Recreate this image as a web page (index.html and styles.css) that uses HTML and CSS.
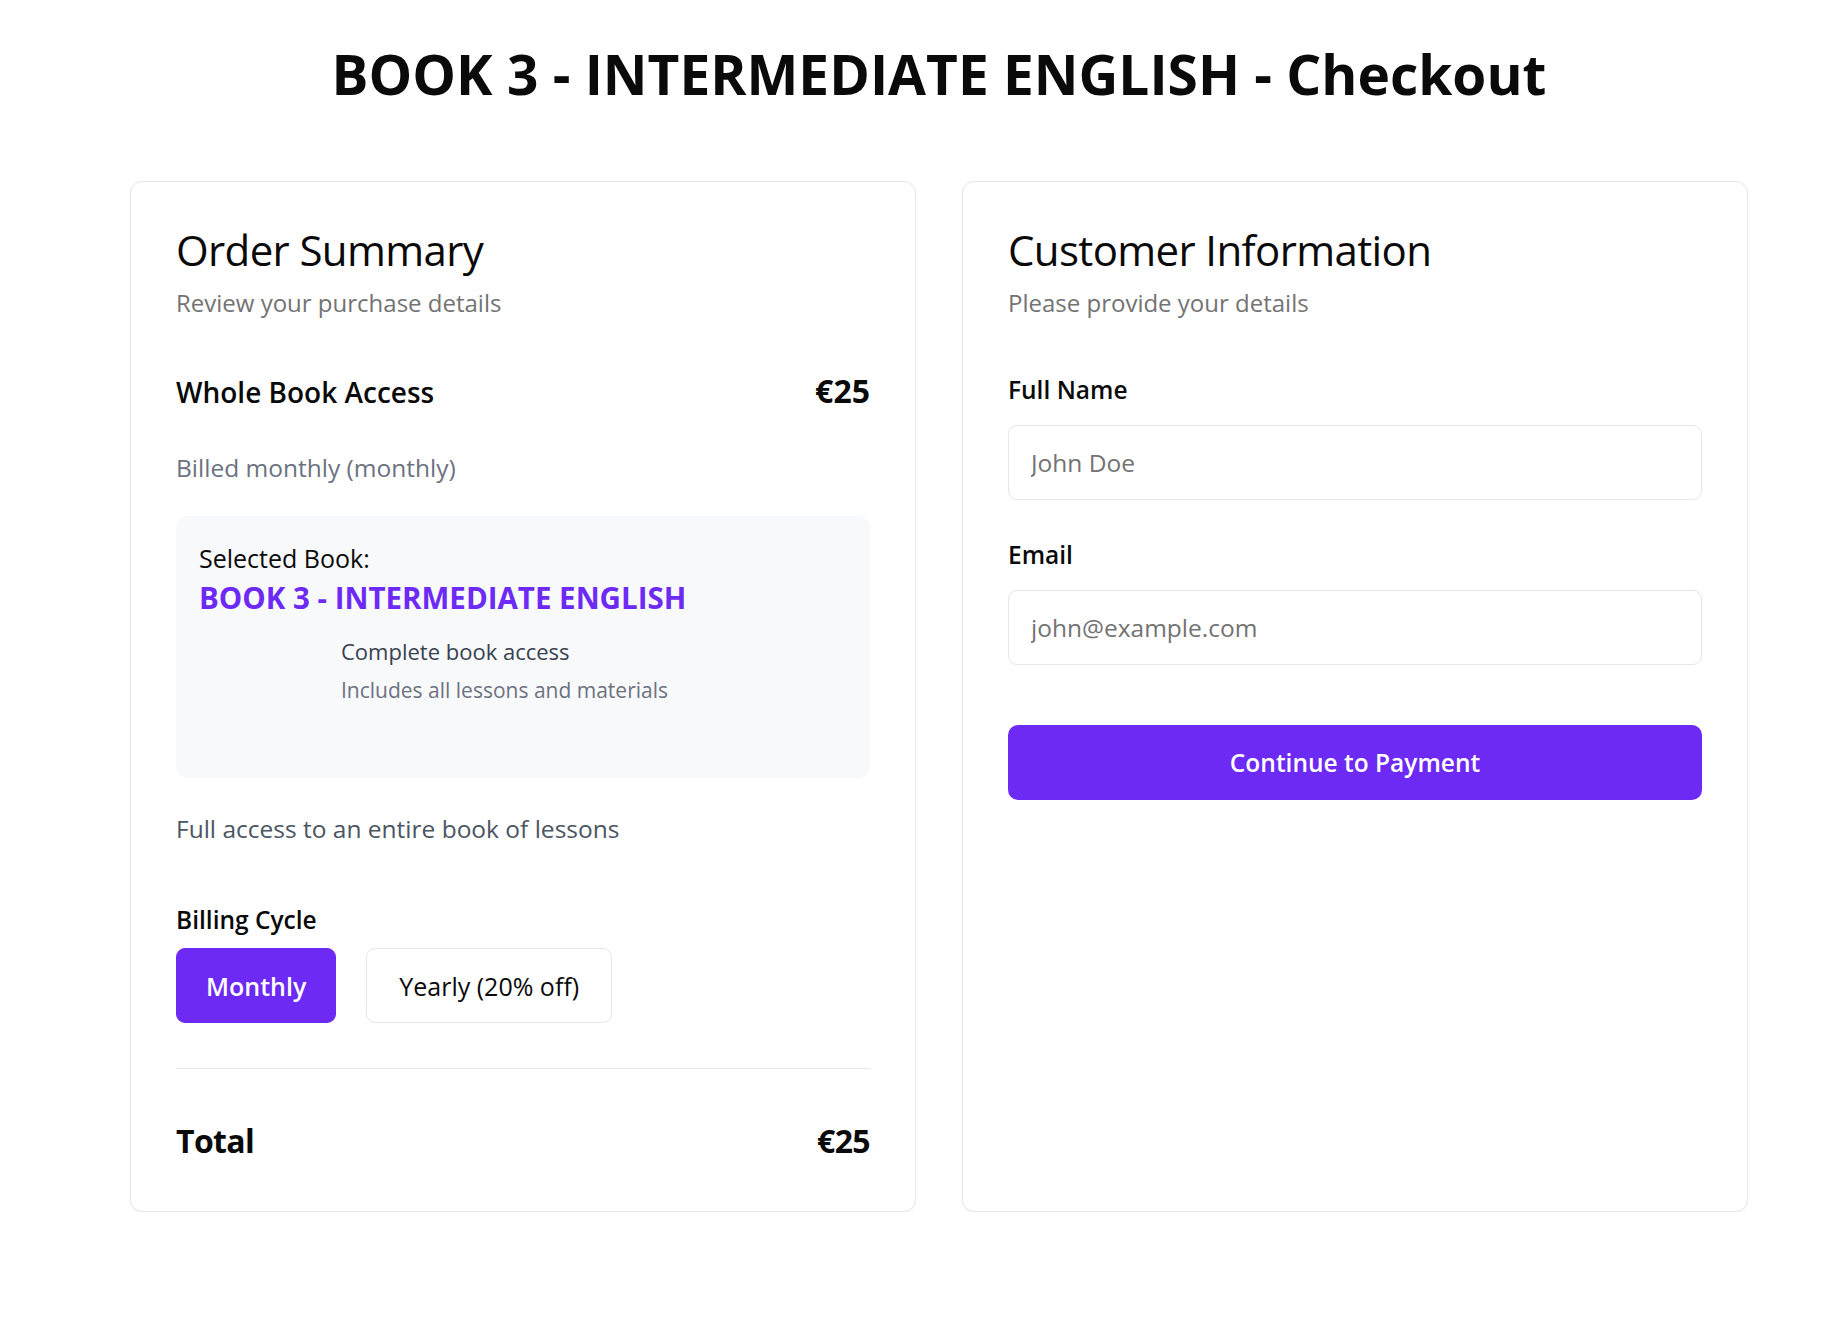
FILE: index.html
```html
<!DOCTYPE html>
<html lang="en">
<head>
<meta charset="utf-8">
<title>BOOK 3 - INTERMEDIATE ENGLISH - Checkout</title>
<link rel="stylesheet" href="styles.css">
</head>
<body>
<main class="page">
  <h1 class="page-title">BOOK 3 - INTERMEDIATE ENGLISH - Checkout</h1>
  <div class="columns">
    <section class="card">
      <h2 class="card-title">Order Summary</h2>
      <p class="card-sub">Review your purchase details</p>

      <div class="plan-row">
        <span class="plan-name">Whole Book Access</span>
        <span class="plan-price">€25</span>
      </div>
      <p class="billed">Billed monthly (monthly)</p>

      <div class="book-box">
        <div class="book-label">Selected Book:</div>
        <div class="book-name">BOOK 3 - INTERMEDIATE ENGLISH</div>
        <div class="book-item">
          <div class="book-thumb"></div>
          <div class="book-text">
            <div class="book-item-title">Complete book access</div>
            <div class="book-item-desc">Includes all lessons and materials</div>
          </div>
        </div>
      </div>

      <p class="plan-desc">Full access to an entire book of lessons</p>

      <div class="cycle-label">Billing Cycle</div>
      <div class="cycle-buttons">
        <button class="cycle-btn active" type="button">Monthly</button>
        <button class="cycle-btn" type="button">Yearly (20% off)</button>
      </div>

      <div class="total-row">
        <span class="total-label">Total</span>
        <span class="total-price">€25</span>
      </div>
    </section>

    <section class="card">
      <h2 class="card-title">Customer Information</h2>
      <p class="card-sub">Please provide your details</p>

      <form class="form">
        <label class="field-label first" for="name">Full Name</label>
        <input class="field-input" id="name" type="text" placeholder="John Doe">
        <label class="field-label" for="email">Email</label>
        <input class="field-input" id="email" type="email" placeholder="john@example.com">
        <button class="pay-btn" type="button">Continue to Payment</button>
      </form>
    </section>
  </div>
</main>
</body>
</html>
```

FILE: styles.css
```css
* { box-sizing: border-box; }

html, body {
  margin: 0;
  background: #ffffff;
}

body {
  font-family: "Open Sans", "Noto Sans", "Liberation Sans", sans-serif;
  color: #0a0a0a;
}

.page {
  padding: 44px 98px 0 130px;
}

.page-title {
  margin: 0;
  text-align: center;
  font-size: 55px;
  line-height: 60px;
  font-weight: 700;
  color: #0a0a0a;
}

.columns {
  margin-top: 77px;
  display: grid;
  grid-template-columns: 1fr 1fr;
  column-gap: 46px;
  align-items: stretch;
}

.card {
  border: 1px solid #e5e7eb;
  border-radius: 12px;
  box-shadow: 0 1px 2px rgba(0, 0, 0, 0.04);
  padding: 41px 45px 46px 45px;
  background: #fff;
}

.card-title {
  margin: 0;
  font-size: 42px;
  line-height: 53px;
  font-weight: 500;
  letter-spacing: -0.015em;
  color: #0a0a0a;
}

.card-sub {
  margin: 12px 0 0 0;
  font-size: 24px;
  line-height: 30px;
  color: #737373;
}

.plan-row {
  margin-top: 55px;
  display: flex;
  justify-content: space-between;
  align-items: baseline;
}

.plan-name {
  font-size: 28px;
  line-height: 36px;
  font-weight: 600;
}

.plan-price {
  font-size: 32px;
  line-height: 36px;
  font-weight: 700;
}

.billed {
  margin: 42px 0 0 0;
  font-size: 24.5px;
  line-height: 32px;
  color: #6b7280;
}

.book-box {
  margin-top: 32px;
  background: #f8f9fb;
  border-radius: 12px;
  padding: 27px 23px 23px 23px;
}

.book-label {
  font-size: 25px;
  line-height: 30px;
  font-weight: 500;
  color: #0a0a0a;
}

.book-name {
  margin-top: 6px;
  font-size: 29.5px;
  line-height: 38px;
  font-weight: 700;
  color: #6d2af5;
}

.book-item {
  margin-top: 12px;
  display: flex;
  gap: 16px;
}

.book-thumb {
  width: 126px;
  height: 126px;
  flex: none;
}

.book-text {
  padding-top: 8px;
}

.book-item-title {
  font-size: 22px;
  line-height: 28px;
  font-weight: 500;
  color: #374151;
}

.book-item-desc {
  margin-top: 11px;
  font-size: 21px;
  line-height: 28px;
  color: #6b7280;
}

.plan-desc {
  margin: 35px 0 0 0;
  font-size: 24.5px;
  line-height: 32px;
  color: #4b5563;
}

.cycle-label {
  margin-top: 59px;
  font-size: 24.5px;
  line-height: 32px;
  font-weight: 600;
}

.cycle-buttons {
  margin-top: 12px;
  display: flex;
  gap: 30px;
}

.cycle-btn {
  height: 75px;
  padding: 0 32px;
  border: 1px solid #e5e7eb;
  border-radius: 9px;
  background: #fff;
  font-family: inherit;
  font-size: 25px;
  font-weight: 500;
  color: #0a0a0a;
}

.cycle-btn.active {
  padding: 0 29px;
  background: #6d2af5;
  border-color: #6d2af5;
  color: #fff;
  font-weight: 600;
}

.total-row {
  margin-top: 45px;
  border-top: 1px solid #e5e7eb;
  padding-top: 52px;
  padding-bottom: 4px;
  display: flex;
  justify-content: space-between;
  align-items: baseline;
}

.total-label,
.total-price {
  font-size: 32px;
  line-height: 40px;
  font-weight: 700;
  letter-spacing: -0.02em;
}

.form {
  display: flex;
  flex-direction: column;
}

.field-label {
  margin-top: 40px;
  font-size: 24.5px;
  line-height: 30px;
  font-weight: 600;
  color: #0a0a0a;
}

.field-label.first {
  margin-top: 57px;
}

.field-input {
  margin-top: 20px;
  height: 75px;
  border: 1px solid #e5e7eb;
  border-radius: 9px;
  padding: 0 22px;
  font-family: inherit;
  font-size: 24.5px;
  color: #0a0a0a;
  background: #fff;
  outline: none;
}

.field-input::placeholder {
  color: #737373;
}

.pay-btn {
  margin-top: 60px;
  height: 75px;
  border: none;
  border-radius: 10px;
  background: #6d2af5;
  color: #fff;
  font-family: inherit;
  font-size: 24.5px;
  font-weight: 600;
}
```
